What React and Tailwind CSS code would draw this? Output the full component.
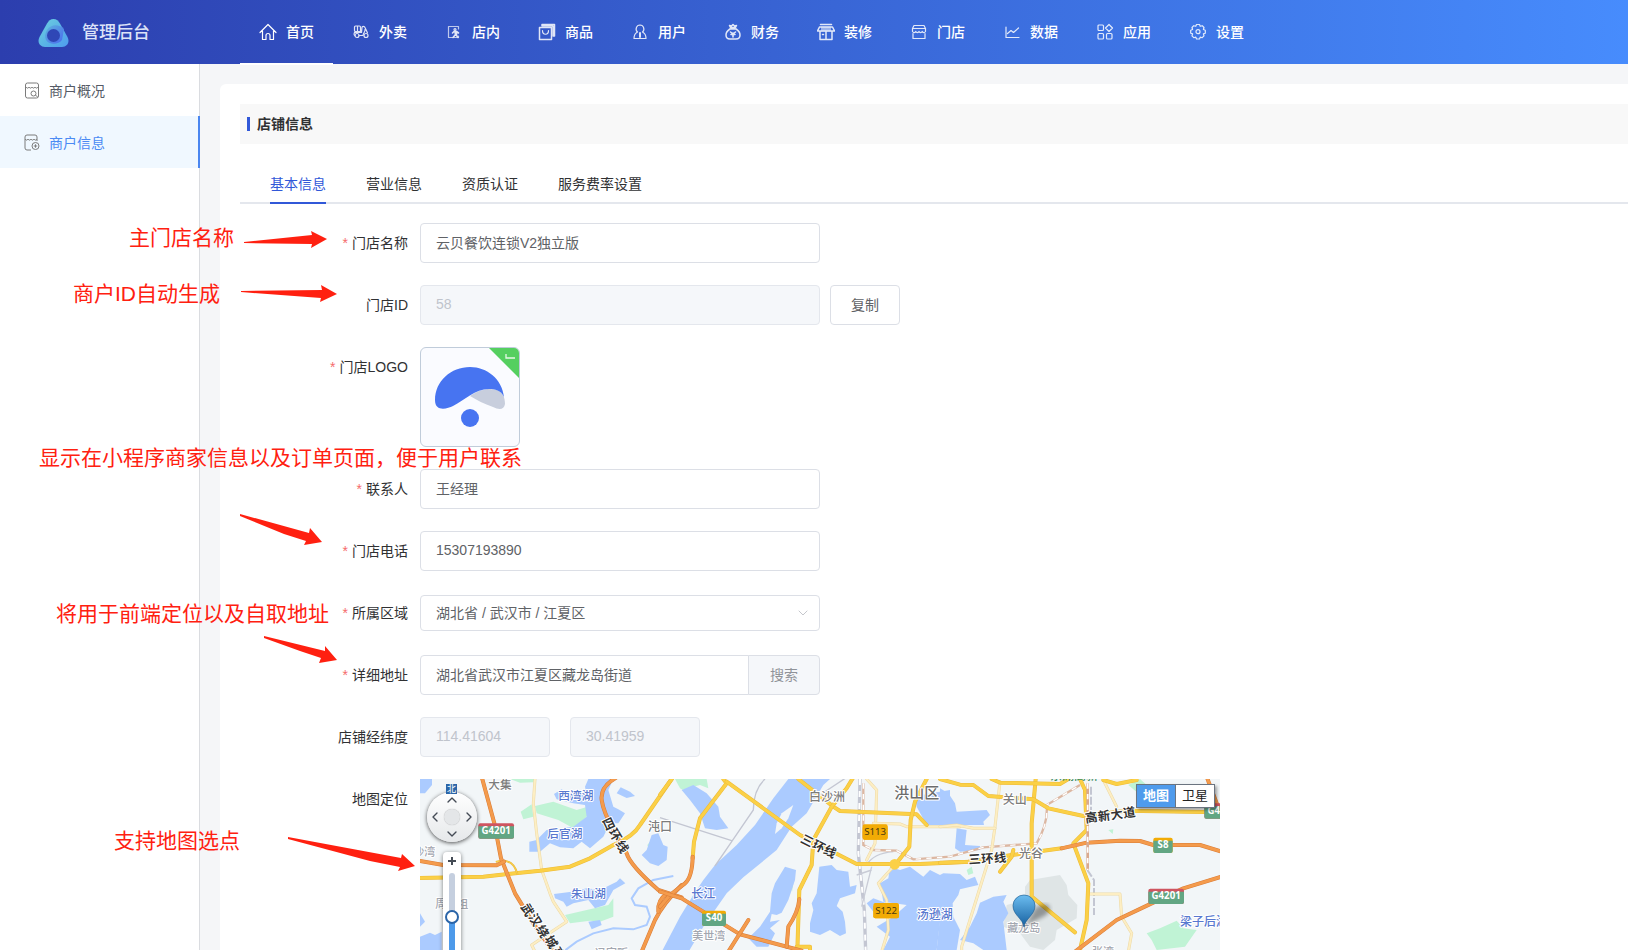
import { useState } from 'react'
import { ChevronDown, ChevronUp, ChevronLeft, ChevronRight } from 'lucide-react'

const NAV = [
  { name: '首页', icon: 'home' },
  { name: '外卖', icon: 'delivery' },
  { name: '店内', icon: 'inStore' },
  { name: '商品', icon: 'goods' },
  { name: '用户', icon: 'user' },
  { name: '财务', icon: 'finance' },
  { name: '装修', icon: 'decorate' },
  { name: '门店', icon: 'store' },
  { name: '数据', icon: 'data' },
  { name: '应用', icon: 'apps' },
  { name: '设置', icon: 'settings' },
]

const TABS = ['基本信息', '营业信息', '资质认证', '服务费率设置']

// 18x18 line icons of the top navigation
const NAV_ICONS = {
  home: <path d="M1 9.500 9 1.500l8 8M3.500 8v8.500h3.500v-4a2 2 0 0 1 4 0v4h3.500V8" />,
  delivery: (
    <>
      <path d="M3.500 3h4a1 1 0 0 1 1 1v4.500h-5a1 1 0 0 1-1-1V4a1 1 0 0 1 1-1zM5.500 3v5.500M2.500 9.500h7L10 4.500C10 3 12.500 3 13 4.500l2.500 5.500M2.500 9.500c-1 2 0 3 .5 3M7 12.500h4c.5-3 2.500-4 2-6" />
      <circle cx="5" cy="12.500" r="2" />
      <circle cx="14" cy="12.500" r="2" />
    </>
  ),
  inStore: (
    <>
      <path d="M13.500 6V3.500h-10v11h10V13M3.500 14.500V3.500" opacity=".8" />
      <circle cx="10" cy="6.500" r="1" />
      <path d="M7.500 10 9 8.500h2.500L13.500 10M10 8.500l.5 3-2.500 3M10.500 11l2.500 3.500M11.500 8.500v3" strokeWidth="1.600" />
    </>
  ),
  goods: (
    <>
      <path d="M1.500 4.500h12v12h-12z" strokeWidth="1.500" />
      <path d="M4 3V1.500h12.500V13h-1.500M4 3h11v10" strokeWidth="1.500" />
      <path d="M4.500 7.500c0 5 6 5 6 0" />
    </>
  ),
  user: (
    <>
      <path d="M9 2a4 4 0 0 1 2.500 7C13.500 10 15 12 15 15.500H3C3 12 4.500 10 6.500 9A4 4 0 0 1 9 2z" />
      <path d="M9 10v4" strokeWidth="2" />
    </>
  ),
  finance: (
    <>
      <path d="M6.500 4.500 5.500 2.500 7.500 3 9 1.500 10.500 3l2-.5-1 2zM5.500 6h7M6 6C3.500 7.500 2 9.500 2 12c0 2.500 1.500 4 4 4h6c2.500 0 4-1.500 4-4 0-2.500-1.500-4.500-4-6" strokeWidth="1.500" />
      <path d="M9 14v-4M6.500 9l2.500 2 2.500-2M7 11.500h4" strokeWidth="1.600" />
    </>
  ),
  decorate: (
    <>
      <path d="M3.500 1.500h11M2.500 4h13L17.500 8H.5zM3 8.500v8h12v-8M9 8.500v8M5.500 11.500h1" strokeWidth="1.500" />
      <path d="M5 4v4M7 4v4M9 4v4M11 4v4M13 4v4" />
    </>
  ),
  store: (
    <>
      <path d="M4 2.500h10l1.500 3v3c-1 1.500-2.500 1.500-3.250 0-.75 1.500-2.500 1.500-3.250 0-.75 1.500-2.500 1.500-3.250 0-.75 1.500-2.250 1.500-3.250 0v-3z" />
      <path d="M2.500 5.500h13M3 10.500v5h12v-5" />
    </>
  ),
  data: <path d="M3 4v10.500h13M4.500 10.500 8 7.500l2.500 2L15.500 5" />,
  apps: (
    <>
      <rect x="2" y="2" width="5.500" height="5.500" rx="1" />
      <rect x="2" y="10.500" width="5.500" height="5.500" rx="1" />
      <rect x="10.500" y="10.500" width="5.500" height="5.500" rx="1" />
      <path d="m13 1.500 3.500 3.500L13 8.500 9.500 5z" />
    </>
  ),
  settings: (
    <>
      <path d="M7.500 1.500h3l.7 1.800 2-.6 1.800 1.800-.6 2 1.900.7v3l-1.900.7.6 2-1.800 1.800-2-.6-.7 1.900h-3l-.7-1.900-2 .6L3 12.900l.6-2-1.900-.7v-3l1.900-.7-.6-2 1.800-1.800 2 .6z" />
      <circle cx="9" cy="8.700" r="2" />
    </>
  ),
}

const WATER = {
  west: [
    'M60 27H96V45L75 70H60z',
    'M462 72 485 58 500 70 560 75 555 50 565 27H640L625 60 640 110 655 118 675 130 655 160 630 160 610 200 570 235 545 215 520 235 480 232 450 220 420 245H388V215L410 210 440 180 520 170 560 140 555 105 520 100 470 88z',
    'M650 70 662 52 690 65 705 78 680 84z',
    'M725 255 740 240 755 195 775 190 790 225 803 230 800 270 775 288 750 280z',
    'M462 372 515 365 560 355 600 360 650 335 660 325 676 340 640 360 615 405 585 415 565 390 520 400 500 410 490 395 465 385z',
    'M60 500 90 488 105 495 125 485V540H60z',
    'M60 430 75 455 60 470z',
    'M565 455 600 450 605 465 575 478z',
  ],
  middle: [
    'M385 27 340 85 285 165 230 225 165 285 130 330 100 375 60 440 0 555H80L130 470 200 370 250 322 350 240 395 170 440 130 490 45 510 27z',
    'M375 290 408 300 405 330 385 390 365 428 350 435 335 432 330 455 360 450 330 475 345 490 325 530H290L265 505 300 470 330 425 335 370 345 340z',
    'M478 290 515 285 530 300 565 305 570 350 590 345 585 370 540 385 530 408 548 425 555 455 558 490 540 498 510 480 480 495 450 485V460L460 420 455 400 470 370z',
    'M65 60 100 45 140 70 175 110 180 140 205 175 170 180 135 175 120 130 90 90z',
    'M620 400 640 385 680 400 670 420 640 425z',
    'M765 80 800 72 870 60V165L800 165 770 110z',
  ],
  east: [
    'M0 55 25 70 45 100 50 125 140 120 150 135 130 155 132 165H0z',
    'M50 175 80 180 75 225 120 228V240L60 245 45 235z',
    'M-150 290-120 300-90 290-50 320-30 300 0 315 10 310 60 312 80 330 105 320 115 345 60 358 55 375 38 400 40 440 0 455-10 540H-170L-150 500-190 470-140 440-100 405-170 395-180 340-155 325z',
    'M120 398 160 380 200 375 190 395 205 430 190 455 200 540H130L100 520 60 510 90 470 110 430z',
    'M0 440 40 440 60 480 50 540H-10z',
  ],
}

const GREENS = {
  west: [
    'M362 125 395 103 400 140 370 148z',
    'M405 108 440 100 460 95 530 120 570 108 560 140 520 175 475 150 410 130z',
    'M495 435 560 420 625 405 640 385V440L600 455 570 452 510 460z',
    'M742 225 770 192 795 250 785 262 750 245z',
    'M330 27H405L400 37 360 38z',
  ],
  middle: ['M45 27H140L145 55 120 45 100 50 65 60 100 80 60 55z', 'M390 345 400 340 396 365z'],
  east: [
    'M620 490 660 475 710 452 730 475 770 480 735 530 650 540 635 510z',
    'M565 45 600 27 620 45 590 66z',
    'M80 300 95 290 100 310 85 315z',
    'M505 180 520 178 518 192z',
  ],
}

// kind, path
const ROADS = {
  west: [
    ['pale', 'M405 27 400 100 410 190 425 300 450 370 460 395 500 455 395 525 405 545'],
    ['yellow', 'M60 324 250 320 420 302 510 290 570 265 640 225Q700 200 720 165L815 27'],
    ['thin', 'M290 275C330 265 345 285 352 312'],
    ['orange', 'M245 20 283 160 303 265 345 370 400 460 470 560'],
    ['orange', 'M60 273 130 285 290 286 312 275'],
    ['orange', 'M650 22Q600 50 605 90 610 125 640 180L680 250Q690 285 775 360L845 382'],
    ['orange', 'M845 345Q790 400 765 450L725 545'],
    ['orange', 'M775 425Q772 390 800 372'],
  ],
  middle: [
    ['pale', 'M620 27 650 60 645 220 620 270'],
    ['pale', 'M640 160 720 162 740 170H900'],
    ['pale', 'M700 290 655 340 680 390 685 480 665 545'],
    ['yellow', 'M190 27 200 40 120 145 102 215 98 265'],
    ['yellow', 'M200 35 420 195 590 282 780 282 930 275'],
    ['yellow', 'M0 75 35 27'],
    ['yellow', 'M415 27 520 110 540 123 770 133 800 165'],
    ['yellow', 'M580 22 560 55 515 110 460 210 455 285 418 360 412 540'],
    ['yellow', 'M410 530H450V545'],
    ['yellow', 'M800 27 765 95 752 150 748 230 705 285'],
    ['orange', 'M98 260Q97 320 75 340L30 375 0 410'],
    ['orange', 'M0 365 65 385 240 493 425 542'],
    ['orange', 'M265 450 205 545'],
    ['orange', 'M418 388Q415 425 385 470L380 530'],
  ],
  east: [
    ['pale', 'M180 35 165 170 155 240 65 530V545'],
    ['pale', 'M0 170 50 165 100 175H165'],
    ['pale', 'M490 30 530 110'],
    ['pale', 'M450 372H540L545 440 575 490 565 545'],
    ['yellow', 'M0 278 85 275 215 255 365 235'],
    ['yellow', 'M180 305 215 260 220 240'],
    ['yellow', 'M287 27 275 160 275 380 405 487'],
    ['yellow', 'M0 27 60 44 100 45 145 78 280 88 325 115 430 138 560 122 840 127'],
    ['yellow', 'M420 27 435 60 440 180 400 220 445 340 440 450 420 540'],
    ['yellow', 'M155 27 180 38 360 42 385 27'],
    ['yellow', 'M490 30 530 42 590 30'],
    ['orange', 'M365 235 440 218 540 212 600 213 640 225 780 225 845 245'],
    ['orange', 'M405 545 530 450 635 400 730 355 845 320'],
    ['orange', 'M800 20 832 105'],
  ],
}

const ROAD_STYLE = {
  pale: { casing: '#ecd9a6', fill: '#fdeec3', width: 9 },
  thin: { casing: '#e9b93c', fill: '#fbd04a', width: 6 },
  yellow: { casing: '#edbb3a', fill: '#fbd046', width: 12 },
  orange: { casing: '#d97c38', fill: '#f49b4c', width: 12 },
}

const OFFSET = {
  west: 'translate(-60 -27)',
  middle: 'translate(720 -27)',
  east: 'translate(1560 -27)',
}

const PLACES = {
  west: [
    ['大集', 265, 57, 35, '#7c7c7c'],
    ['西湾湖', 475, 91, 35, '#5878cf'],
    ['后官湖', 442, 204, 35, '#5878cf'],
    ['沌口', 744, 184, 36, '#7c7c7c'],
    ['朱山湖', 513, 384, 35, '#5878cf'],
    ['沙湾', 40, 258, 33, '#a3a7b0'],
    ['周李祖', 106, 414, 33, '#a3a7b0'],
    ['冯家畈', 585, 562, 33, '#a3a7b0'],
  ],
  middle: [
    ['白沙洲', 447, 93, 36, '#7c7c7c'],
    ['洪山区', 703, 84, 45, '#6c6c6c'],
    ['长江', 94, 384, 36, '#5878cf'],
    ['美世湾', 97, 511, 33, '#a3a7b0'],
    ['汤逊湖', 770, 448, 36, '#5878cf'],
  ],
  east: [
    ['关山', 188, 102, 36, '#7c7c7c'],
    ['光谷', 237, 264, 36, '#7c7c7c'],
    ['藏龙岛', 202, 487, 33, '#a3a7b0'],
    ['梁子后湖', 720, 467, 36, '#5878cf'],
    ['张湾', 456, 557, 33, '#a3a7b0'],
  ],
}

// one rotated glyph per entry: text, x, y, angle
const ROAD_NAMES = {
  west: [
    ['四', 626, 162, 65], ['环', 645, 195, 60], ['线', 666, 230, 60],
    ['武', 382, 420, 60], ['汉', 405, 450, 60], ['绕', 428, 484, 60], ['城', 453, 516, 60], ['高', 476, 550, 60],
  ],
  middle: [['三', 442, 212, 27], ['环', 476, 229, 27], ['线', 510, 245, 27]],
  east: [
    ['三', 104, 268, -4], ['环', 142, 266, -4], ['线', 180, 263, -4],
    ['高', 454, 143, -8], ['新', 492, 138, -8], ['大', 530, 133, -8], ['道', 568, 128, -8],
  ],
}

const SHIELDS = {
  west: [['G4201', 235, 160, 107, '#62a683', '#cf5560', '#fff']],
  middle: [
    ['S113', 608, 163, 75, '#f2ab05', '#f2ab05', '#4a3a10'],
    ['S40', 126, 422, 72, '#62a683', '#f2ab05', '#fff'],
    ['S122', 640, 399, 77, '#f2ab05', '#f2ab05', '#4a3a10'],
  ],
  east: [
    ['S8', 640, 203, 58, '#62a683', '#f2ab05', '#fff'],
    ['G4201', 625, 356, 107, '#62a683', '#cf5560', '#fff'],
    ['G4201', 793, 100, 107, '#62a683', '#cf5560', '#fff'],
  ],
}

const TILES = ['west', 'middle', 'east']

function MapCanvas() {
  return (
    <svg viewBox="0 0 2400 1500" className="block w-full" aria-label="地图">
      <defs>
        <linearGradient id="pin" x1="0" y1="0" x2="0" y2="1">
          <stop offset="0" stopColor="#6cbdf0" />
          <stop offset="1" stopColor="#155f9f" />
        </linearGradient>
        <filter id="pinShadow"><feGaussianBlur stdDeviation="6" /></filter>
      </defs>
      <rect width="2400" height="1500" fill="#f2f6f8" />
      <path transform={OFFSET.east} fill="#dfe5e6" d="M255 350 270 330 360 315 380 345 385 375 412 405 410 445 350 480 345 510 310 540 270 530 240 490 190 470 200 405 255 390z" />
      {TILES.map(t => (
        <g key={t} transform={OFFSET[t]}>
          {GREENS[t].map(d => <path key={d} d={d} fill="#c0f3d5" />)}
          {WATER[t].map(d => <path key={d} d={d} fill="#abcbff" />)}
        </g>
      ))}
      <g transform={OFFSET.west} fill="none" stroke="#abcbff" strokeWidth="6">
        <path d="M820 318 760 330 715 355 695 385 705 405 740 410 750 440 740 465 700 478 640 475 580 490 530 515 490 545" />
      </g>
      <path transform={OFFSET.middle} fill="#f2f6f8" d="M345 192 350 160 365 130 400 105 385 145 365 175z" />

      {/* railways */}
      <g transform={OFFSET.middle} fill="none">
        <path d="M600 27 595 250 613 420 617 545" stroke="#c3c6d2" strokeWidth="10" />
        <path d="M600 27 595 250 613 420 617 545" stroke="#fff" strokeWidth="6" strokeDasharray="18 18" />
        <path d="M635 290 605 410M590 315 635 300M620 285Q640 250 700 245" stroke="#c9ccd6" strokeWidth="4" />
        <path d="M315 27Q280 60 280 120L215 215 165 288M0 143 215 212M560 22 480 75" stroke="#c3c6d2" strokeWidth="4" />
        <path d="M610 40V225L640 240 710 242 760 268 870 260 970 232 1130 220Q1165 160 1160 105L1260 45" stroke="#dcb7a2" strokeWidth="7" />
        <path d="M610 40V225L640 240 710 242 760 268 870 260 970 232 1130 220Q1165 160 1160 105L1260 45" stroke="#fff" strokeWidth="4" strokeDasharray="16 16" />
      </g>
      <g transform={OFFSET.east} fill="none">
        <path d="M453 50V120M442 300 462 330V435" stroke="#c3c6d2" strokeWidth="6" strokeDasharray="24 6" />
      </g>

      {TILES.map(t => (
        <g key={t} transform={OFFSET[t]} fill="none" strokeLinejoin="round" strokeLinecap="round">
          {ROADS[t].map(([kind, d]) => (
            <g key={d}>
              <path d={d} stroke={ROAD_STYLE[kind].casing} strokeWidth={ROAD_STYLE[kind].width} />
              <path d={d} stroke={ROAD_STYLE[kind].fill} strokeWidth={ROAD_STYLE[kind].width - 3} />
            </g>
          ))}
        </g>
      ))}
      <g transform={OFFSET.east} fill="none">
        <path d="M443 40V300" stroke="#d9a98f" strokeWidth="8" />
        <path d="M443 40V300" stroke="#fff" strokeWidth="5" strokeDasharray="16 16" />
      </g>
      <circle cx="1424" cy="256" r="16" fill="#fbd046" />

      {TILES.map(t => (
        <g key={t} transform={OFFSET[t]}>
          {SHIELDS[t].map(([text, x, y, w, bg, top, color]) => (
            <g key={text + x}>
              <rect x={x} y={y} width={w} height="46" rx="6" fill={top} />
              <path d={`M${x} ${y + 9}h${w}v31a6 6 0 0 1-6 6H${x + 6}a6 6 0 0 1-6-6z`} fill={bg} />
              <text x={x + w / 2} y={y + 32} fontSize="29" fontWeight={color === '#fff' ? 700 : 400} textAnchor="middle" fill={color} fontFamily="Noto Sans">{text}</text>
            </g>
          ))}
          <g stroke="#fff" strokeWidth="6" strokeLinejoin="round" paintOrder="stroke" fontWeight="500">
            {PLACES[t].map(([text, x, y, size, color]) => (
              <text key={text} x={x} y={y} fontSize={size} fill={color}>{text}</text>
            ))}
            {ROAD_NAMES[t].map(([text, x, y, angle]) => (
              <text key={text + x} transform={`translate(${x} ${y}) rotate(${angle})`} y="13" fontSize="37" fontWeight="700" textAnchor="middle" fill="#333">{text}</text>
            ))}
          </g>
        </g>
      ))}
      <g transform={OFFSET.east} fontSize="36" fontWeight="500" fill="#3f8f63">
        <text x="330" y="30">东湖高新</text>
      </g>

      {/* selected location */}
      <g transform={OFFSET.east}>
        <path d="M255 468 285 415Q310 395 328 408 335 430 300 445z" fill="#000" opacity=".35" filter="url(#pinShadow)" />
        <path d="M252 471C248 445 219 435 219 407a33 32 0 0 1 66 0C285 435 256 445 252 471z" fill="url(#pin)" stroke="#1f5f92" strokeWidth="2" />
      </g>
    </svg>
  )
}

function MapPicker() {
  const [zoom, setZoom] = useState(11)
  const pan = 'absolute flex items-center justify-center text-[#444b55]'
  return (
    <div className="relative w-[800px] overflow-hidden">
      <MapCanvas />

      <div className="absolute left-[7px] top-[13px] size-[50px] rounded-full bg-linear-to-b from-white to-[#e6e8ea] shadow-[0_1px_4px_rgba(0,0,0,0.7)]">
        <button type="button" aria-label="上" className={`${pan} left-[17px] top-0 size-4`}><ChevronUp size={18} strokeWidth={2} /></button>
        <button type="button" aria-label="左" className={`${pan} left-0 top-[17px] size-4`}><ChevronLeft size={18} strokeWidth={2} /></button>
        <button type="button" aria-label="右" className={`${pan} right-0 top-[17px] size-4`}><ChevronRight size={18} strokeWidth={2} /></button>
        <button type="button" aria-label="下" className={`${pan} bottom-0 left-[17px] size-4`}><ChevronDown size={18} strokeWidth={2} /></button>
        <span className="absolute left-[17px] top-[17px] size-4 rounded-full bg-[#e4e6e8] shadow-[0_0_1px_rgba(0,0,0,0.3)]" />
      </div>
      <span className="absolute left-[26px] top-[5px] flex h-[10px] w-[11px] items-center justify-center bg-[#2b65a8] text-[9px] leading-none text-white">北</span>

      <div className="absolute left-[23px] top-[73px] flex h-[260px] w-[18px] flex-col items-center gap-1 rounded-sm bg-white pb-1 shadow-[0_1px_4px_rgba(0,0,0,0.5)]">
        <button type="button" aria-label="放大" className="h-[17px] text-[#444b55]">
          <svg width="10" height="10" viewBox="0 0 10 10" stroke="currentColor" strokeWidth="2"><path d="M5 1v8M1 5h8" /></svg>
        </button>
        <input
          type="range"
          aria-label="缩放级别"
          min="3"
          max="14"
          value={zoom}
          onChange={e => setZoom(Number(e.target.value))}
          className="h-[150px] w-[6px] appearance-none rounded-full bg-[linear-gradient(to_bottom,#c5cfdf_44px,#4d9aea_44px)] [direction:rtl] [writing-mode:vertical-lr] [&::-webkit-slider-thumb]:size-[14px] [&::-webkit-slider-thumb]:appearance-none [&::-webkit-slider-thumb]:rounded-full [&::-webkit-slider-thumb]:border-2 [&::-webkit-slider-thumb]:border-[#2b65a8] [&::-webkit-slider-thumb]:bg-white"
        />
      </div>

      <div className="absolute right-[5px] top-[5px] flex h-6 w-[79px] border border-[#6b7480] bg-white text-[13px] shadow-[2px_2px_3px_rgba(0,0,0,0.35)]">
        <button type="button" className="flex-1 border-r border-[#6b7480] bg-[#4f9bec] font-bold text-white">地图</button>
        <button type="button" className="flex-1 text-[#222]">卫星</button>
      </div>
    </div>
  )
}

function FormRow({ label, htmlFor, required, children }) {
  return (
    <div className="mb-[22px] flex items-start">
      <label htmlFor={htmlFor} className="w-[180px] shrink-0 pr-3 text-right leading-10 text-[#303133]">
        {required && <span className="mr-1 text-[#f56c6c]">*</span>}
        {label}
      </label>
      {children}
    </div>
  )
}

function TextInput({ className = 'w-[400px] rounded', disabled, ...props }) {
  const tone = disabled ? 'border-[#e4e7ed] bg-[#f5f7fa] text-[#c0c4cc]' : 'border-[#dcdfe6] bg-white text-[#606266]'
  return <input type="text" disabled={disabled} className={`h-10 border px-[15px] pb-[2px] outline-none ${tone} ${className}`} {...props} />
}

function Header() {
  return (
    <header className="flex h-16 shrink-0 bg-linear-to-r from-[#2c3eae] to-[#478cfd]">
      <div className="flex w-60 shrink-0 items-center gap-[13px] pl-[38px] pt-[2px]">
        <svg width="31" height="30" viewBox="0 0 31 30">
          <defs>
            <linearGradient id="brand" x1="0" y1="0" x2="1" y2="1">
              <stop offset="0" stopColor="#6fd0e0" />
              <stop offset=".6" stopColor="#57b0e6" />
              <stop offset="1" stopColor="#4f9cf0" />
            </linearGradient>
            <linearGradient id="brandInner" x1="0" y1="0" x2="1" y2="1">
              <stop offset="0" stopColor="#5db4dd" />
              <stop offset="1" stopColor="#4a68ee" />
            </linearGradient>
          </defs>
          <path d="M15.500 1C18.500 1 20.500 3 22 5.500L29.500 19C32 24 29.500 29 24 29H7C1.500 29-1 24 1.500 19L9 5.500C10.500 3 12.500 1 15.500 1z" fill="url(#brand)" />
          <path d="M9 12C13 6 21 6 26 11L24 22C20 27 11 27 8 22 6.500 19 7 15 9 12z" fill="url(#brandInner)" />
          <circle cx="15.500" cy="17.500" r="6.500" fill="#2f47b6" />
        </svg>
        <span className="text-[17px] font-medium text-[#dde3f8]">管理后台</span>
      </div>
      <nav className="-mb-px flex">
        {NAV.map((item, i) => (
          <a key={item.name} href="#" className={`flex w-[93px] items-center gap-[9px] border-b-2 pl-[19px] text-white ${i === 0 ? 'border-white' : 'border-transparent'}`}>
            <svg width="18" height="18" viewBox="0 0 18 18" fill="none" stroke="currentColor" strokeWidth="1.200" strokeLinejoin="round" strokeLinecap="round" className={i === 0 ? '' : 'opacity-85'}>
              {NAV_ICONS[item.icon]}
            </svg>
            <span className="pt-px font-medium">{item.name}</span>
          </a>
        ))}
      </nav>
    </header>
  )
}

function Sidebar() {
  return (
    <aside className="w-[200px] shrink-0 border-r border-[#dadce0] bg-white">
      <a href="#" className="flex h-[52px] items-center gap-[9px] pl-6 pt-px text-[#555b66]">
        <svg width="16" height="17" viewBox="0 0 16 17" fill="none" stroke="#7b7b7b" strokeWidth="1">
          <rect x="1.500" y="1" width="13" height="15" rx="2" />
          <path d="M2 5c1 1.500 2 1.500 3 0 1 1.500 2 1.500 3 0 1 1.500 2 1.500 3 0 1 1.500 2 1.500 3 0M11.500 13l2 2" />
          <circle cx="9.500" cy="11.500" r="2.500" />
        </svg>
        商户概况
      </a>
      <a href="#" className="-mr-px flex h-[52px] items-center gap-[9px] border-r-2 border-[#4a86f0] bg-[#f0f8ff] pl-6 pt-px text-[#4a8af4]">
        <svg width="16" height="17" viewBox="0 0 16 17" fill="none" stroke="#7b7b7b" strokeWidth="1">
          <path d="M7 16H3a2 2 0 0 1-2-2V3a2 2 0 0 1 2-2h8a2 2 0 0 1 2 2v4M1 5c1 1.500 2 1.500 3 0 1 1.500 2 1.500 3 0 1 1.500 2 1.500 3 0 1 1.500 2 1.500 3 0" />
          <circle cx="11.500" cy="12" r="3.500" />
          <path d="M9.800 12h3.400M11.500 10.300v3.400" />
        </svg>
        商户信息
      </a>
    </aside>
  )
}

function ShopLogo() {
  return (
    <div className="relative size-[100px] overflow-hidden rounded-md border border-[#c0ccda] bg-[#fafbff]">
      <svg viewBox="1 1 98 98" className="size-full">
        <path d="M50 49C60 42 70 41 77 43 83 45 85 51 85 57 84 63 79 63 73 60 64 57 57 53 50 49z" fill="#c8cedd" />
        <path d="M15 53C15 34 31 20 50 20 67 20 82 32 84 50 81 43 75 42 69 42 55 42 45 53 33 59 27 62 15 65 15 53z" fill="#4774f1" />
        <circle cx="50" cy="71" r="9" fill="#4774f1" />
        <path d="M68 0h32v32z" fill="#55cf60" />
        <path d="M86 7v4h9" fill="none" stroke="#e6f9e6" strokeWidth="1.300" />
      </svg>
    </div>
  )
}

const NOTES = [
  { text: '主门店名称', pos: 'left-[129px] top-[222px]' },
  { text: '商户ID自动生成', pos: 'left-[73px] top-[278px]' },
  { text: '显示在小程序商家信息以及订单页面，便于用户联系', pos: 'left-[39px] top-[442px]' },
  { text: '将用于前端定位以及自取地址', pos: 'left-[56px] top-[598px]' },
  { text: '支持地图选点', pos: 'left-[114px] top-[825px]' },
]

// Red hints drawn over the page
function Notes() {
  return (
    <div className="pointer-events-none absolute inset-0 text-[#ff2010]">
      {NOTES.map(n => (
        <p key={n.text} className={`absolute whitespace-nowrap text-[21px] leading-8 ${n.pos}`}>{n.text}</p>
      ))}
      <svg width="430" height="900" viewBox="0 0 430 900" fill="currentColor" className="absolute left-0 top-0">
        <path d="M244 242 312 235 311 231 327 239 311 248 312 244 244 243z" />
        <path d="M241 291 322 290 321 285 337 294 320 302 321 298 241 292z" />
        <path d="M240 514 309 533 310 528 322 542 304 545 306 541 284 534 240 516z" />
        <path d="M264 636 325 651 325 646 337 660 319 663 321 658 300 651 264 638z" />
        <path d="M288 837 401 858 402 854 415 866 398 871 400 867 370 861 288 839z" />
      </svg>
    </div>
  )
}

export default function App() {
  const [tab, setTab] = useState(0)
  const [form, setForm] = useState({
    name: '云贝餐饮连锁V2独立版',
    contact: '王经理',
    phone: '15307193890',
    address: '湖北省武汉市江夏区藏龙岛街道',
  })
  const bind = key => ({ id: key, value: form[key], onChange: e => setForm({ ...form, [key]: e.target.value }) })

  return (
    <div className="relative flex h-screen flex-col overflow-hidden bg-[#f5f6f8] text-sm font-['Liberation_Sans','Noto_Sans_CJK_SC',sans-serif]">
      <Header />
      <div className="flex min-h-0 flex-1">
        <Sidebar />
        <main className="min-w-0 flex-1 overflow-hidden pl-5 pt-5">
          <div className="rounded-tl-md bg-white pl-5 pt-5">
            <div className="flex h-10 items-center bg-[#f8f8f8] pl-[7px]">
              <h1 className="flex items-center gap-[7px] font-bold text-[#303133] before:h-[14px] before:w-[3px] before:bg-[#3158d8]">店铺信息</h1>
            </div>

            <div role="tablist" className="mb-[19px] mt-5 flex h-10 gap-10 border-b-2 border-[#e4e7ed] pl-[30px]">
              {TABS.map((name, i) => (
                <button
                  key={name}
                  type="button"
                  role="tab"
                  aria-selected={tab === i}
                  onClick={() => setTab(i)}
                  className={`-mb-[2px] h-10 border-b-2 pt-[2px] ${tab === i ? 'border-[#3158d8] text-[#3158d8]' : 'border-transparent text-[#303133]'}`}
                >
                  {name}
                </button>
              ))}
            </div>

            <form onSubmit={e => e.preventDefault()}>
              <FormRow label="门店名称" htmlFor="name" required>
                <TextInput {...bind('name')} />
              </FormRow>
              <FormRow label="门店ID" htmlFor="shopId">
                <TextInput id="shopId" value="58" disabled />
                <button type="button" className="ml-[10px] h-10 w-[70px] rounded border border-[#dcdfe6] bg-white text-[#606266]">复制</button>
              </FormRow>
              <FormRow label="门店LOGO" required>
                <ShopLogo />
              </FormRow>
              <FormRow label="联系人" htmlFor="contact" required>
                <TextInput {...bind('contact')} />
              </FormRow>
              <FormRow label="门店电话" htmlFor="phone" required>
                <TextInput {...bind('phone')} />
              </FormRow>
              <FormRow label="所属区域" htmlFor="region" required>
                <div className="relative flex h-10 items-center">
                  <select id="region" className="h-9 w-[400px] appearance-none rounded border border-[#dcdfe6] bg-white px-[15px] text-[#606266]">
                    <option>湖北省 / 武汉市 / 江夏区</option>
                  </select>
                  <ChevronDown size={16} strokeWidth={1} className="pointer-events-none absolute right-[9px] text-[#a8abb2]" />
                </div>
              </FormRow>
              <FormRow label="详细地址" htmlFor="address" required>
                <TextInput className="w-[329px] rounded-l" {...bind('address')} />
                <button type="button" className="-ml-px h-10 w-[72px] rounded-r border border-[#dcdfe6] bg-[#f5f7fa] text-[#909399]">搜索</button>
              </FormRow>
              <FormRow label="店铺经纬度" htmlFor="lng">
                <TextInput id="lng" value="114.41604" disabled className="mr-5 w-[130px] rounded" />
                <TextInput aria-label="纬度" value="30.41959" disabled className="w-[130px] rounded" />
              </FormRow>
              <FormRow label="地图定位">
                <MapPicker />
              </FormRow>
            </form>
          </div>
        </main>
      </div>
      <Notes />
    </div>
  )
}
